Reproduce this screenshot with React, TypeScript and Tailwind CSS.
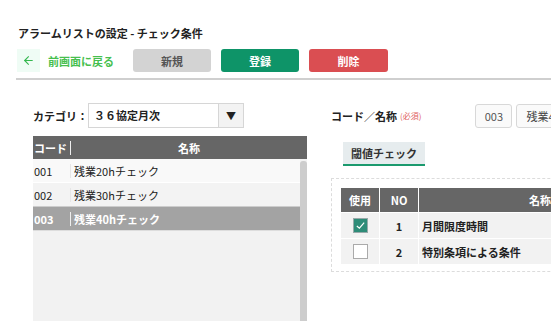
import { ArrowLeft } from 'lucide-react';

const rows = [
  { code: '001', name: '残業20hチェック' },
  { code: '002', name: '残業30hチェック' },
  { code: '003', name: '残業40hチェック' },
];

const conds = [
  { no: 1, name: '月間限度時間', on: true },
  { no: 2, name: '特別条項による条件', on: false },
];

function Check({ on }: { on: boolean }) {
  return on ? (
    <span className="flex h-[15px] w-[15px] items-center justify-center border border-[#9aa] bg-[#2e8c78]">
      <svg viewBox="0 0 12 12" className="h-[11px] w-[11px]" fill="none" stroke="white" strokeWidth="1.3">
        <path d="M2 6.5 L4.8 9 L10 2.8" />
      </svg>
    </span>
  ) : (
    <span className="block h-[15px] w-[15px] border border-[#aaa] bg-white" />
  );
}

export default function App() {
  return (
    <div className="relative h-[321px] w-[551px] overflow-hidden bg-white font-['Noto_Sans_CJK_JP','Noto_Sans',sans-serif] text-[11px] text-[#333]">
      {/* title */}
      <h1 className="pl-[18px] pt-[26px] text-[11px] font-bold leading-[14px] text-[#222]">
        アラームリストの設定 - チェック条件
      </h1>

      {/* toolbar */}
      <div className="mt-[9px] flex h-[23px] items-center pl-[17px]">
        <button className="flex h-[23px] w-[23px] items-center justify-center bg-[#effcf5] text-[#34b84e]">
          <ArrowLeft className="h-[13px] w-[13px]" strokeWidth={2} />
        </button>
        <span className="ml-[8px] w-[85px] font-bold leading-[14px] text-[#47bf4f]">前画面に戻る</span>
        <button className="h-[23px] w-[78px] rounded-[3px] bg-[#d3d3d3] font-bold leading-[14px] text-[#555]">新規</button>
        <button className="ml-[10px] h-[23px] w-[78px] rounded-[3px] bg-[#0e9468] font-bold leading-[14px] text-white">登録</button>
        <button className="ml-[10px] h-[23px] w-[79px] rounded-[3px] bg-[#da4e52] font-bold leading-[14px] text-white">削除</button>
      </div>

      <div className="ml-[16px] mt-[6px] h-[2px] bg-[#cfcfcf]" />

      <div className="mt-[23px] flex whitespace-nowrap">
        {/* left list */}
        <div className="ml-[33px] w-[274px] shrink-0">
          <div className="flex h-[25px] items-center">
            <span className="w-[55px] font-bold leading-[14px] text-[#222]">カテゴリ：</span>
            <div className="flex h-[25px] w-[156px] border border-[#d6d6d6] bg-white">
              <span className="flex-1 pl-[5px] pt-[4px] font-bold leading-[14px] text-[#222]">３６協定月次</span>
              <span className="flex w-[25px] items-center justify-center border-l border-[#d6d6d6] bg-[#f3f3f3] text-[10px] text-[#222]">
                ▼
              </span>
            </div>
          </div>

          <div className="mt-[8px] flex h-[23px] items-center bg-[#666] font-bold leading-[14px] text-white">
            <span className="w-[38px] border-r border-[#eee] pl-[1px]">コード</span>
            <span className="flex-1 text-center">名称</span>
          </div>

          <div className="flex h-[200px] bg-[#f2f2f2]">
            <div className="flex-1">
              {rows.map((r, i) => {
                const sel = i === 2;
                return (
                  <div
                    key={r.code}
                    className={`flex h-[24px] items-center border-b leading-[14px] ${
                      sel
                        ? 'border-[#ddd] bg-[#a3a3a3] font-bold text-white'
                        : i === 0
                        ? 'border-white bg-[#f9f9f9] text-[#222]'
                        : 'border-[#ccc] bg-[#f3f3f3] text-[#222]'
                    }`}
                  >
                    <span className="w-[37px] pl-[1px]">{r.code}</span>
                    <span className={`border-l pl-[3px] ${sel ? 'border-[#eee]' : 'border-[#e6e6e6]'}`}>{r.name}</span>
                  </div>
                );
              })}
            </div>
            <div className="mt-[2px] w-[7px] rounded-t-[3px] bg-[#cdcdcd]" />
          </div>
        </div>

        {/* right detail */}
        <div className="ml-[24px] w-[340px] shrink-0">
          <div className="flex h-[25px] items-center">
            <span className="font-bold leading-[14px] text-[#222]">コード／名称</span>
            <span className="ml-[3px] text-[8px] leading-[10px] text-[#e06060]">(必須)</span>
            <span className="ml-[54px] flex h-[24px] w-[37px] shrink-0 items-center justify-center rounded-[3px] border border-[#d8d8d8] bg-[#fafafa] leading-[14px] text-[#555]">
              003
            </span>
            <span className="ml-[4px] flex h-[24px] w-[120px] shrink-0 items-center rounded-[3px] border border-[#d8d8d8] bg-[#fafafa] pl-[9px] leading-[14px] text-[#444]">
              残業40hチェック
            </span>
          </div>

          <div className="ml-[12px] mt-[14px] flex h-[24px] w-[82px] items-center justify-center border-b-2 border-[#1b9a6e] bg-[#e6ecee] font-bold leading-[14px] text-[#333]">
            閾値チェック
          </div>

          <div className="mt-[12px] w-[340px] border border-dashed border-[#dcdcdc] px-[9px] pb-[7px] pt-[9px]">
            <div className="flex h-[24px] items-center gap-px bg-white font-bold leading-[14px] text-white">
              <span className="flex h-full w-[38px] items-center justify-center bg-[#666]">使用</span>
              <span className="flex h-full w-[38px] items-center justify-center bg-[#666]">NO</span>
              <span className="flex h-full flex-1 items-center justify-center bg-[#666]">名称</span>
            </div>
            {conds.map((c) => (
              <div key={c.no} className="mt-px flex h-[25px] gap-px leading-[14px] text-[#222]">
                <span className="flex w-[38px] items-center justify-center bg-[#f2f2f2]">
                  <Check on={c.on} />
                </span>
                <span className="flex w-[38px] items-center justify-center bg-[#f2f2f2] font-bold">{c.no}</span>
                <span className="flex flex-1 items-center bg-[#f2f2f2] pl-[3px] font-bold">{c.name}</span>
              </div>
            ))}
          </div>
        </div>
      </div>
    </div>
  );
}
